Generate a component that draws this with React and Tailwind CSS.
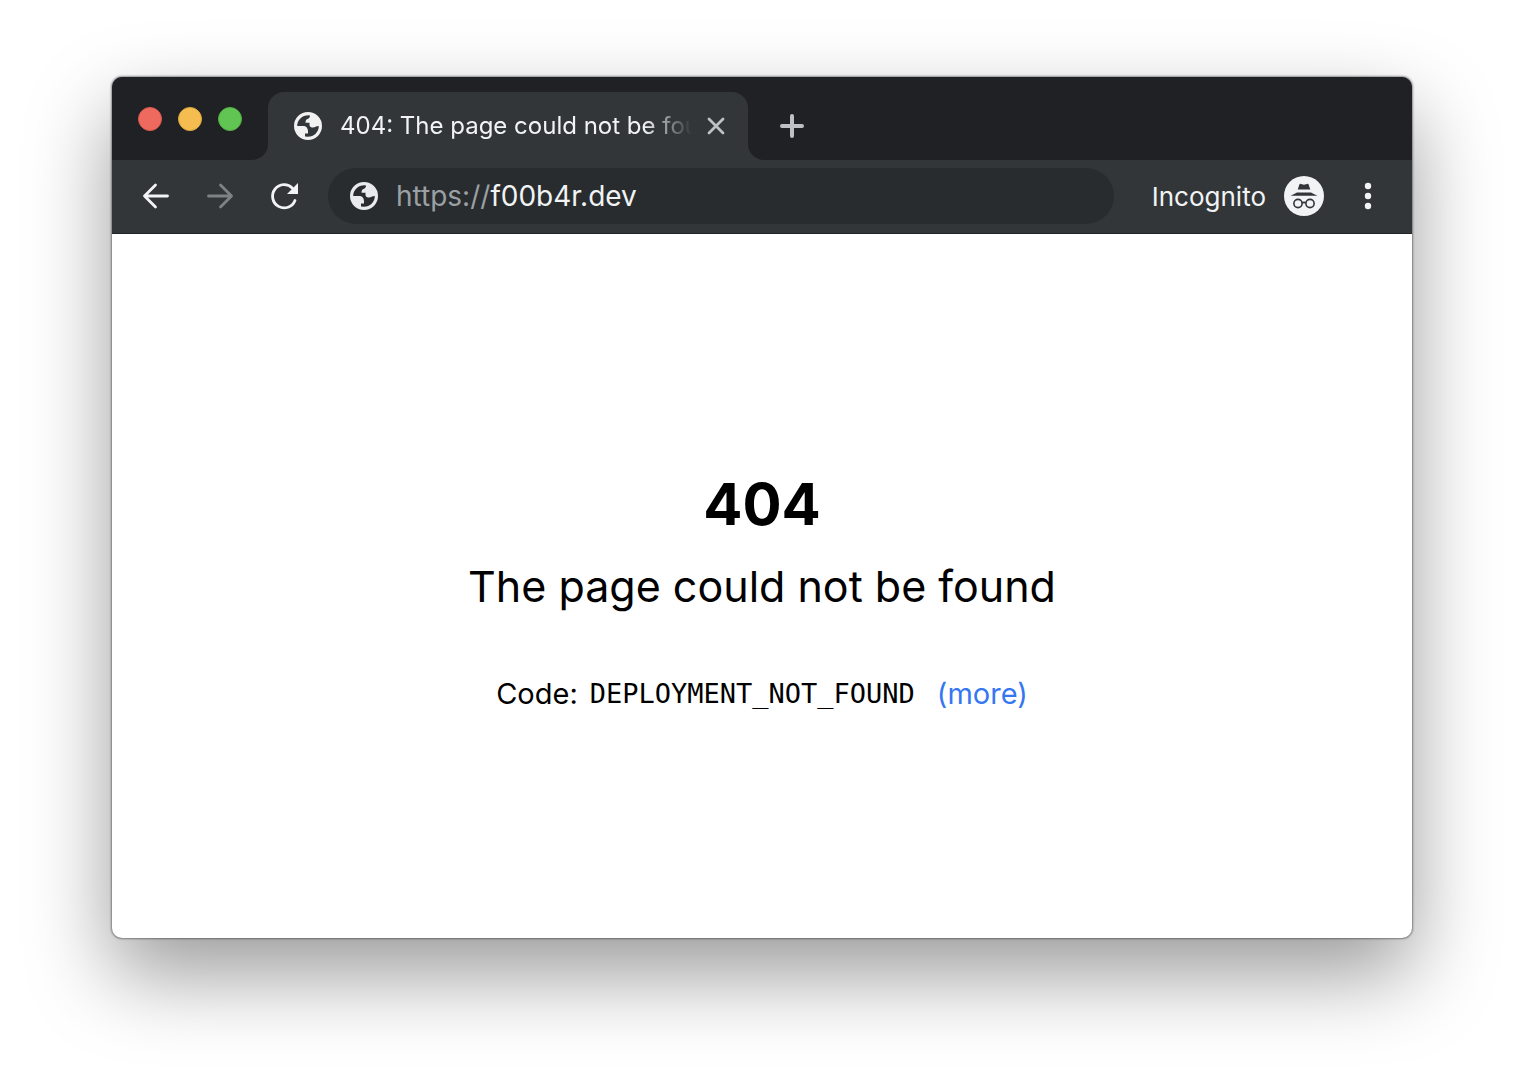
import React, { useState } from 'react'

function GlobeIcon({ className }) {
  return (
    <svg viewBox="0 0 28 28" className={className} aria-hidden="true">
      <path
        fill="currentColor"
        fillRule="evenodd"
        d="M14 0a14 14 0 1 0 0 28a14 14 0 0 0 0-28zM3.2 14C3.2 8 8 3.2 14.5 3.2L16 3.5C16 5.500 15 6.500 13.500 7C11.800 7.500 11.500 9 11.500 10.800H15.500V13C15.500 15 17.500 15.500 19 15.500C21 15.500 22 14 24.800 14C24.800 20 20 24.800 14 24.800L11 24.400V21.500H14V19.500C14 15.800 12 14 9 14z"
      />
    </svg>
  )
}

function IncognitoIcon() {
  return (
    <svg viewBox="0 0 40 40" className="size-10" aria-hidden="true">
      <circle cx="20" cy="20" r="20" fill="#f1f3f4" />
      <path fill="#323639" d="M15.500 8.200Q16 7.500 17 7.900L20 8.700L23 7.900Q24 7.500 24.500 8.200L26.300 13.500H13.700z" />
      <path fill="#323639" d="M13 16.500H27Q30.500 18.500 33.500 19.700H6.500Q9.500 18.500 13 16.500z" />
      <g fill="none" stroke="#323639" strokeWidth="1.600">
        <circle cx="14" cy="27.500" r="4.100" />
        <circle cx="26" cy="27.500" r="4.100" />
        <path d="M18 27Q20 25.800 22 27" />
      </g>
    </svg>
  )
}

function TabStrip() {
  return (
    <div className="flex h-[83px] bg-[#323639]">
      <div className="flex w-[156px] shrink-0 items-center gap-4 rounded-br-2xl bg-[#202124] pl-[26px]">
        <button aria-label="Close window" className="size-6 rounded-full border border-[#d9584e] bg-[#ee6a5f]"></button>
        <button aria-label="Minimize window" className="size-6 rounded-full border border-[#dba93f] bg-[#f5bd4f]"></button>
        <button aria-label="Zoom window" className="size-6 rounded-full border border-[#54ad43] bg-[#61c554]"></button>
      </div>
      <div className="w-[480px] bg-[#202124] pt-[15px]">
        <div className="flex h-full items-center rounded-t-2xl bg-[#323639] pl-[26px] pr-5">
          <GlobeIcon className="size-7 shrink-0 text-[#f1f1f2]" />
          <span className="ml-[18px] min-w-0 flex-1 overflow-hidden whitespace-nowrap text-2xl text-[#f1f3f4] mask-r-from-[calc(100%-48px)]">
            404: The page could not be found
          </span>
          <button aria-label="Close tab" className="ml-3 text-[#bdc1c6]">
            <svg viewBox="0 0 24 24" className="size-6" stroke="currentColor" strokeWidth="2.800" strokeLinecap="round">
              <path d="M5 5L19 19M19 5L5 19" />
            </svg>
          </button>
        </div>
      </div>
      <div className="flex flex-1 items-center rounded-bl-2xl bg-[#202124] pl-7 pt-[15px]">
        <button aria-label="New tab" className="text-[#bdc1c6]">
          <svg viewBox="0 0 32 32" className="size-8" stroke="currentColor" strokeWidth="4" strokeLinecap="round">
            <path d="M16 6V26M6 16H26" />
          </svg>
        </button>
      </div>
    </div>
  )
}

function Toolbar() {
  const [url, setUrl] = useState('f00b4r.dev')

  return (
    <div className="flex h-[74px] items-center border-b border-[#222325] bg-[#323639] px-7 pb-px text-[#f1f3f4]">
      <div className="flex gap-8">
        <button aria-label="Back">
          <svg viewBox="0 0 32 32" className="size-8" fill="none" stroke="currentColor" strokeWidth="2.800" strokeLinecap="round" strokeLinejoin="round">
            <path d="M27.500 16H4.500M15.500 5L4.500 16L15.500 27" />
          </svg>
        </button>
        <button aria-label="Forward" disabled className="text-[#7e8284]">
          <svg viewBox="0 0 32 32" className="size-8" fill="none" stroke="currentColor" strokeWidth="2.800" strokeLinecap="round" strokeLinejoin="round">
            <path d="M4.500 16H27.500M16.500 5L27.500 16L16.500 27" />
          </svg>
        </button>
        <button aria-label="Reload">
          <svg viewBox="0 0 32 32" className="size-8" fill="none" stroke="currentColor" strokeWidth="2.800" strokeLinecap="round">
            <path d="M27 20.500A11.600 11.600 0 1 1 24.500 8.200" />
            <path d="M30 3V14H19z" fill="currentColor" stroke="none" />
          </svg>
        </button>
      </div>
      <form className="ml-7 flex h-14 min-w-0 flex-1 items-center rounded-full bg-[#282c2f] pl-[22px] pr-6 text-[28px]" onSubmit={(event) => event.preventDefault()}>
        <GlobeIcon className="size-7 shrink-0 text-[#e8eaed]" />
        <label htmlFor="address" className="ml-[18px] text-[#9aa0a3]">https://</label>
        <input id="address" value={url} onChange={(event) => setUrl(event.target.value)} className="min-w-0 flex-1 bg-transparent outline-none" />
      </form>
      <span className="ml-[38px] text-[26px]">Incognito</span>
      <button aria-label="Incognito profile" className="ml-[18px]"><IncognitoIcon /></button>
      <button aria-label="Menu" className="ml-7">
        <svg viewBox="0 0 32 32" className="size-8" fill="currentColor">
          <circle cx="16" cy="6" r="3.200" />
          <circle cx="16" cy="16" r="3.200" />
          <circle cx="16" cy="26" r="3.200" />
        </svg>
      </button>
    </div>
  )
}

export default function App() {
  return (
    <div className="flex min-h-screen bg-white px-28 pb-[148px] pt-[77px] font-['Inter',sans-serif]">
      <div className="flex flex-1 flex-col overflow-hidden rounded-[10px] bg-white shadow-[0_0_2px_1px_rgba(0,0,0,0.4),0_36px_84px_rgba(0,0,0,0.4)]">
        <TabStrip />
        <Toolbar />
        <main className="flex flex-1 flex-col items-center justify-center pt-3.5 text-black">
          <h1 className="text-[58px] font-bold leading-[72px]">404</h1>
          <p className="mt-2.5 text-[43px] leading-[72px]">The page could not be found</p>
          <p className="mt-12 flex items-center text-[29px] leading-12">
            Code:
            <code className="ml-3 font-['DejaVu_Sans_Mono',monospace] text-[27px]">DEPLOYMENT_NOT_FOUND</code>
            <a href="#more" className="ml-[22px] text-[#3577f0]">(more)</a>
          </p>
        </main>
      </div>
    </div>
  )
}
